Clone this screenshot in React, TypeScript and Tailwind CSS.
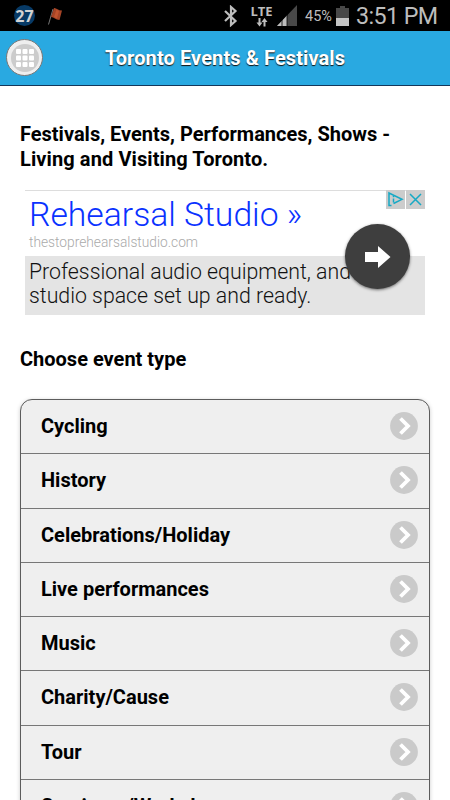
import type { ReactNode } from "react";

const events = [
  "Cycling",
  "History",
  "Celebrations/Holiday",
  "Live performances",
  "Music",
  "Charity/Cause",
  "Tour",
  "Seminars/Workshops",
];

const StatusBar = () => {
  return (
    <div className="flex h-[31px] items-center bg-black text-[#bdbdbd]">
      <div className="ml-[14px] flex h-[21px] w-[21px] items-center justify-center rounded-full bg-[#073a66] font-['Open_Sans'] text-[16px] font-bold leading-none text-[#d2d2d2]">
        27
      </div>
      <svg className="ml-[12px]" width="16" height="18" viewBox="0 0 16 18">
        <path d="M6 2 1.500 17.500" stroke="#777" strokeWidth="1" />
        <path d="M7 1c2-.5 4 2.500 8 2.500L12.500 13c-4 0-5.500-3-8.500-3z" fill="#a54426" />
        <path d="M9.500 2.500 7 10l3 1.500L12 4z" fill="#c0532e" />
      </svg>
      <svg className="ml-[160px]" width="16" height="22" viewBox="0 0 16 22">
        <path d="m2 6 10.500 10L8 20V2l4.500 4L2 16" fill="none" stroke="currentColor" strokeWidth="2.200" />
      </svg>
      <div className="ml-[12px] flex w-[21px] flex-col items-center">
        <span className="font-['Open_Sans'] text-[13px] font-bold leading-[13px]">LTE</span>
        <svg width="12" height="9" viewBox="0 0 12 9">
          <path d="M2.500 0h2v4.500H6.500L3.500 8.500.500 4.500h2zM7.500 8.500h2V4h2L8.500 0l-3 4h2z" fill="currentColor" />
        </svg>
      </div>
      <svg className="ml-[5px]" width="20" height="21" viewBox="0 0 20 21">
        <path d="M0 21 20 0v21z" fill="#484848" />
        <path d="M0 21 10 10.500V21z" fill="currentColor" />
        <path d="M5 14v7M10 9v12" stroke="#000" strokeWidth=".8" />
      </svg>
      <Label className="ml-[8px] mt-[3px] w-[27px] text-[14.500px]">45%</Label>
      <svg className="ml-[4px]" width="13" height="20" viewBox="0 0 13 20">
        <path d="M4 0h5v2h4v18H0V2h4z" fill="#484848" />
        <path d="M0 12h13v8H0z" fill="#c4c4c4" />
      </svg>
      <Label className="ml-[7px] mt-[3px] text-[23.300px] tracking-[-0.600px]">3:51 PM</Label>
    </div>
  );
};

const Label = ({ className, children }: { className: string; children: ReactNode }) => (
  <span className={`whitespace-nowrap leading-none ${className}`}>{children}</span>
);

const Header = () => {
  return (
    <div className="relative flex h-[55px] items-center justify-center border-b border-[#14375a] bg-[#29a9e1]">
      <div className="absolute left-[6px] top-[8px] flex h-[37px] w-[37px] items-center justify-center rounded-full border border-[#777] bg-[#eee]">
        <div className="flex h-[28px] w-[28px] items-center justify-center rounded-full bg-[#ccc]">
          <svg width="18" height="18" viewBox="0 0 18 18" fill="#fff">
            {[0, 6.5, 13].map((y) =>
              [0, 6.5, 13].map((x) => (
                <rect key={`${x}-${y}`} x={x} y={y} width="5" height="5" rx="1" />
              ))
            )}
          </svg>
        </div>
      </div>
      <h1 className="whitespace-nowrap text-[20px] font-bold tracking-[0.1px] text-white [text-shadow:0_1px_1px_#111]">
        Toronto Events &amp; Festivals
      </h1>
    </div>
  );
};

const Ad = () => {
  return (
    <div className="relative ml-[25px] mt-[18px] h-[125px] w-[400px] whitespace-nowrap border-t border-[#ddd] font-light">
      <div className="h-[65px] pl-[4px]">
        <p className="pt-[4px] text-[33.700px] leading-[40px] text-[#0a32ff]">Rehearsal Studio »</p>
        <p className="text-[13.750px] leading-[15px] text-[#aaa]">thestoprehearsalstudio.com</p>
      </div>
      <div className="h-[59px] bg-[#e4e4e4] pl-[4px] pt-[4px] text-[21.300px] leading-[24px] text-[#111]">
        <p>Professional audio equipment, and</p>
        <p>studio space set up and ready.</p>
      </div>
      <div className="absolute right-0 top-[-1px] flex gap-[1px]">
        <svg width="19" height="19" viewBox="0 0 19 19">
          <path d="M0 0h19v19H0z" fill="#ccc" />
          <path d="M5.500 15.500H3V3l13 6.300-8.500 4.200" fill="none" stroke="#16a9c5" strokeWidth="1.500" />
          <path d="M7.500 6v1.300M7.500 8.500v4" stroke="#16a9c5" strokeWidth="1.500" />
        </svg>
        <svg width="19" height="19" viewBox="0 0 19 19">
          <path d="M0 0h19v19H0z" fill="#ccc" />
          <path d="m4 4 11 11M15 4 4 15" stroke="#16a9c5" strokeWidth="1.500" />
        </svg>
      </div>
      <div className="absolute left-[320px] top-[33px] flex h-[65px] w-[65px] items-center justify-center rounded-full bg-[#3e3e3e] shadow-[0_1px_3px_#0008]">
        <svg width="26" height="22" viewBox="0 0 26 22">
          <path d="M0 6h13V0l12.500 11L13 22v-6H0z" fill="#fff" />
        </svg>
      </div>
    </div>
  );
};

const App = () => {
  return (
    <div className="h-[800px] w-[450px] overflow-hidden bg-white font-['Roboto',sans-serif] text-black">
      <StatusBar />
      <Header />
      <p className="ml-[20px] mt-[36px] whitespace-nowrap text-[20px] font-bold leading-[25px]">
        Festivals, Events, Performances, Shows -
        <br />
        <span className="tracking-[0.1px]">Living and Visiting Toronto.</span>
      </p>
      <Ad />
      <p className="ml-[20px] mt-[32px] text-[20px] font-bold leading-[25px]">Choose event type</p>
      <ul className="ml-[20px] mt-[27px] w-[410px] overflow-hidden rounded-t-[12px] border border-[#5c5c5c] bg-[#efefef] shadow-[0_1px_4px_#0003]">
        {events.map((item) => (
          <li
            key={item}
            className="flex h-[54.250px] items-center justify-between border-b border-[#777] pb-[1px] pl-[20px] pr-[11px] text-[20px] font-bold"
          >
            <span>{item}</span>
            <svg width="28" height="28" viewBox="0 0 28 28">
              <circle cx="14" cy="14" r="13.900" fill="#cacaca" />
              <path d="m10.500 6.500 7.500 7.500-7.500 7.500" fill="none" stroke="#fff" strokeWidth="3.800" />
            </svg>
          </li>
        ))}
      </ul>
    </div>
  );
};

export default App;
